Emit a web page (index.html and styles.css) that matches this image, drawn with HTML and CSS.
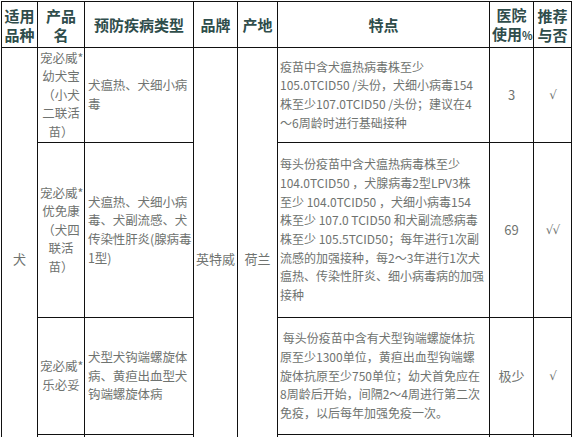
FILE: index.html
```html
<!DOCTYPE html>
<html lang="zh">
<head>
<meta charset="utf-8">
<link rel="stylesheet" href="styles.css">
</head>
<body>
<table class="vt">
  <colgroup>
    <col class="c-kind"><col class="c-name"><col class="c-dis"><col class="c-brand"><col class="c-origin"><col class="c-feat"><col class="c-use"><col class="c-rec">
  </colgroup>
  <thead>
    <tr class="r-head">
      <th>适用<br>品种</th>
      <th>产品<br>名</th>
      <th>预防疾病类型</th>
      <th>品牌</th>
      <th>产地</th>
      <th>特点</th>
      <th>医院<br>使用<span class="pct">%</span></th>
      <th>推荐<br>与否</th>
    </tr>
  </thead>
  <tbody>
    <tr class="r-1">
      <td rowspan="4" class="kind">犬</td>
      <td class="name">宠必威*<br>幼犬宝<br>（小犬<br>二联活<br>苗）</td>
      <td class="dis">犬瘟热、犬细小病<br>毒</td>
      <td rowspan="4" class="brand">英特威</td>
      <td rowspan="4" class="origin">荷兰</td>
      <td class="feat">疫苗中含犬瘟热病毒株至少<br>105.0TCID50 /头份，犬细小病毒154<br>株至少107.0TCID50 /头份；建议在4<br>～6周龄时进行基础接种</td>
      <td class="num">3</td>
      <td class="num chk">√</td>
    </tr>
    <tr class="r-2">
      <td class="name">宠必威*<br>优免康<br>（犬四<br>联活<br>苗）</td>
      <td class="dis">犬瘟热、犬细小病<br>毒、犬副流感、犬<br>传染性肝炎(腺病毒<br>1型)</td>
      <td class="feat">每头份疫苗中含犬瘟热病毒株至少<br>104.0TCID50 ，犬腺病毒2型LPV3株<br>至少 104.0TCID50 ，犬细小病毒154<br>株至少 107.0 TCID50 和犬副流感病毒<br>株至少 105.5TCID50；每年进行1次副<br>流感的加强接种，每2～3年进行1次犬<br>瘟热、传染性肝炎、细小病毒病的加强<br>接种</td>
      <td class="num">69</td>
      <td class="num chk">√√</td>
    </tr>
    <tr class="r-3">
      <td class="name">宠必威*<br>乐必妥</td>
      <td class="dis">犬型犬钩端螺旋体<br>病、黄疸出血型犬<br>钩端螺旋体病</td>
      <td class="feat">&nbsp;每头份疫苗中含有犬型钩端螺旋体抗<br>原至少1300单位，黄疸出血型钩端螺<br>旋体抗原至少750单位；幼犬首免应在<br>8周龄后开始，间隔2～4周进行第二次<br>免疫，以后每年加强免疫一次。</td>
      <td class="num">极少</td>
      <td class="num chk">√</td>
    </tr>
    <tr class="r-4">
      <td></td>
      <td></td>
      <td></td>
      <td></td>
      <td></td>
    </tr>
  </tbody>
</table>
</body>
</html>
```

FILE: styles.css
```css
html, body {
  margin: 0;
  padding: 0;
  background: #ffffff;
  overflow: hidden;
}

body {
  font-family: "Noto Sans CJK SC", "Noto Sans", sans-serif;
  color: #6f7370;
}

.vt {
  border-collapse: collapse;
  table-layout: fixed;
  width: 570px;
  margin: 1px 0 0 1px;
}

.vt th,
.vt td {
  border: 1px solid #111111;
  padding: 0 2px;
  vertical-align: middle;
  text-align: center;
  overflow: hidden;
}

.c-kind { width: 36px; }
.c-name { width: 47px; }
.c-dis { width: 109px; }
.c-brand { width: 44px; }
.c-origin { width: 40px; }
.c-feat { width: 212px; }
.c-use { width: 44px; }
.c-rec { width: 38px; }

.r-head th {
  height: 45px;
  font-size: 15px;
  line-height: 19px;
  font-weight: 700;
  color: #2f4d4b;
  white-space: nowrap;
}

.pct {
  font-size: 11px;
}

.r-1 td { height: 94px; }
.r-2 td { height: 174px; }
.r-3 td { height: 116px; }
.r-4 td { height: 34px; }

.kind,
.brand,
.origin {
  font-size: 13px;
  line-height: 18px;
}

.name {
  font-size: 12.5px;
  line-height: 18.6px;
  white-space: nowrap;
}

.vt .dis {
  font-size: 12.5px;
  line-height: 18.6px;
  text-align: left;
  white-space: nowrap;
  padding: 0 0 0 3px;
  letter-spacing: -0.1px;
}

.vt .feat {
  font-size: 12px;
  line-height: 18.7px;
  text-align: left;
  white-space: nowrap;
}

.num {
  font-size: 13px;
  line-height: 18px;
}

.chk {
  font-family: "DejaVu Sans", sans-serif;
  font-size: 12px;
  letter-spacing: -1px;
}
```
